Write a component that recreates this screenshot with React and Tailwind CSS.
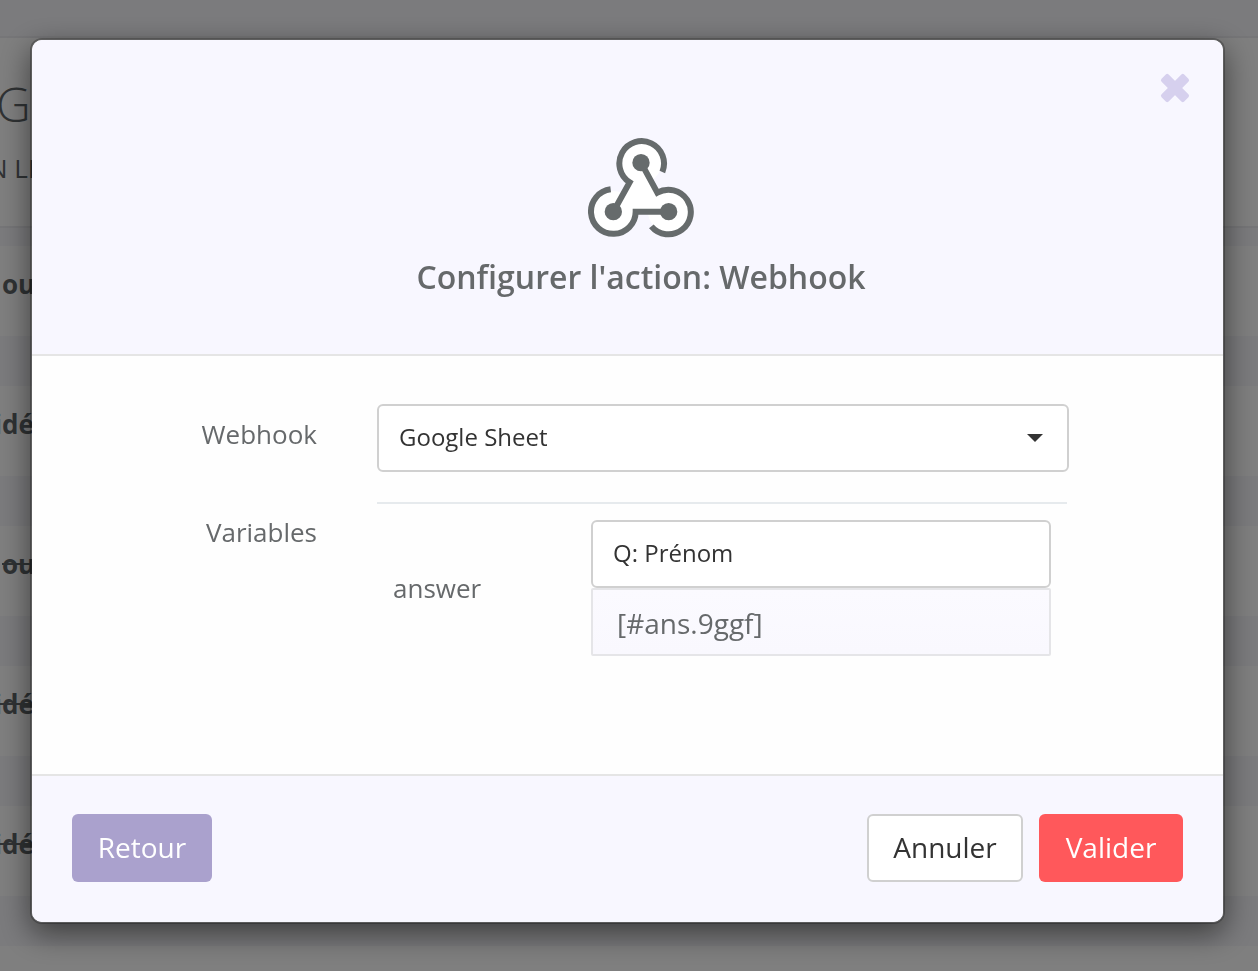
import React, { useState } from 'react';

const WebhookLogo = () => (
  <svg className="w-[106px] h-[101px]" viewBox="84 50 318 303" aria-hidden="true">
    <g fill="#fff">
      <circle cx="243" cy="127" r="62" />
      <circle cx="160" cy="274" r="62" />
      <circle cx="326" cy="274" r="62" />
      <path d="M243 127 L160 274 L326 274 Z" />
    </g>
    <g fill="none" stroke="#666b6c" strokeWidth="18">
      <path d="M307 155 A67 67 0 1 0 209 186 L160 274" />
      <path d="M243 127 L292 217 A67 67 0 1 1 274 318" />
      <path d="M152 207 A67 67 0 1 0 227 274 L326 274" />
    </g>
    <g fill="#666b6c">
      <circle cx="243" cy="127" r="26" />
      <circle cx="160" cy="274" r="26" />
      <circle cx="326" cy="274" r="26" />
    </g>
  </svg>
);

const CloseIcon = () => (
  <svg className="w-8 h-8" viewBox="0 0 32 32" fill="#d6d0ee" aria-hidden="true">
    <rect x="0" y="11" width="32" height="10" rx="2" transform="rotate(45 16 16)" />
    <rect x="0" y="11" width="32" height="10" rx="2" transform="rotate(-45 16 16)" />
  </svg>
);

const rows = [
  { text: 'ou', done: false, indent: true },
  { text: 'idé', done: false, indent: false },
  { text: 'ou', done: true, indent: true },
  { text: 'idé', done: true, indent: false },
  { text: 'idé', done: true, indent: false },
];

const PageBehind = () => (
  <div className="h-screen overflow-hidden bg-[#f6f6fa] text-[#5f6568]" aria-hidden="true">
    <header className="mt-9 h-48 border-y-2 border-[#ececf0] bg-white pt-8">
      <p className="text-5xl leading-[68px] font-light -ml-1">G</p>
      <p className="text-[26px] leading-9 mt-3 -ml-3">N LI</p>
    </header>
    <div className="mt-[18px] flex flex-col gap-[50px]">
      {rows.map((row, i) => (
        <div key={i} className="h-[90px] bg-white pt-5">
          <p
            className={`text-[26px] leading-9 font-bold ${row.done ? 'line-through' : ''} ${
              row.indent ? 'ml-0.5' : '-ml-1.5'
            }`}
          >
            {row.text}
          </p>
        </div>
      ))}
      <div className="h-[90px] bg-white" />
    </div>
  </div>
);

const App = () => {
  const [webhook, setWebhook] = useState('sheet');
  const [answer, setAnswer] = useState('Q: Prénom');

  return (
    <div className="font-['Open_Sans',sans-serif]">
      <PageBehind />

      {/* Overlay */}
      <div className="fixed inset-0 overflow-auto bg-black/50 pt-[38px] pl-[30px] pr-[33px]">
        <form
          role="dialog"
          aria-labelledby="dialog-title"
          onSubmit={(e) => e.preventDefault()}
          className="rounded-xl border-2 border-black/25 bg-clip-padding bg-[#fefefe] shadow-[0_10px_30px_rgba(0,0,0,0.5)] text-[#66696b]"
        >
          {/* Header */}
          <div className="relative flex flex-col items-center rounded-t-[10px] border-b-2 border-[#e5e5e5] bg-[#f8f7ff] pt-[97px] pb-[53px] pl-[27px]">
            <button type="button" aria-label="Fermer" className="absolute top-8 right-8">
              <CloseIcon />
            </button>
            <WebhookLogo />
            <h1 id="dialog-title" className="mt-[15px] text-[32px] leading-[48px] font-semibold">
              Configurer l'action: Webhook
            </h1>
          </div>

          {/* Fields */}
          <div className="grid grid-cols-[285px_1fr] gap-x-[60px] pt-12 pr-[154px] pb-[118px] text-[26px] leading-9">
            <label htmlFor="webhook" className="pt-3 text-right">Webhook</label>
            <div className="relative">
              <select
                id="webhook"
                value={webhook}
                onChange={(e) => setWebhook(e.target.value)}
                className="block h-[68px] w-full appearance-none rounded-md border-2 border-[#d0d0d0] bg-white pl-5 pr-16 pb-0.5 text-2xl text-[#333]"
              >
                <option value="sheet">Google Sheet</option>
              </select>
              <svg className="pointer-events-none absolute right-[26px] top-[30px] h-2 w-4" viewBox="0 0 16 8" fill="#333">
                <path d="M0 0 H16 L8 8 Z" />
              </svg>
            </div>

            <div className="mt-[30px] pt-3 text-right">Variables</div>
            <div className="mt-[30px] mr-0.5 flex items-center border-t-2 border-[#e6eaed] pt-4 pr-4 pl-4">
              <label htmlFor="answer" className="flex-1">answer</label>
              <div className="w-[460px]">
                <input
                  id="answer"
                  type="text"
                  value={answer}
                  onChange={(e) => setAnswer(e.target.value)}
                  className="block h-[68px] w-full rounded-md border-2 border-[#d0d0d0] bg-white px-5 pb-1 text-2xl text-[#333]"
                />
                <output
                  htmlFor="answer"
                  className="block h-[68px] rounded-xs border-2 border-[#e5e5e8] bg-linear-to-b from-[#fbfaff] to-[#f9f8fe] px-6 pt-[13px] text-[28px] leading-10"
                >
                  [#ans.9ggf]
                </output>
              </div>
            </div>
          </div>

          {/* Actions */}
          <div className="flex gap-4 rounded-b-[10px] border-t-2 border-[#e5e5e5] bg-[#f8f7ff] px-10 pt-[38px] pb-10 text-[28px] leading-10">
            <button type="button" className="mr-auto h-[68px] w-[140px] rounded-md bg-[#aaa1cd] pb-0.5 font-medium text-white">
              Retour
            </button>
            <button type="button" className="h-[68px] w-[156px] rounded-md border-2 border-[#d0d0d0] bg-white pb-0.5 text-[#333]">
              Annuler
            </button>
            <button type="submit" className="h-[68px] w-36 rounded-md bg-[#ff585b] pb-0.5 font-medium text-white">
              Valider
            </button>
          </div>
        </form>
      </div>
    </div>
  );
};

export default App;
